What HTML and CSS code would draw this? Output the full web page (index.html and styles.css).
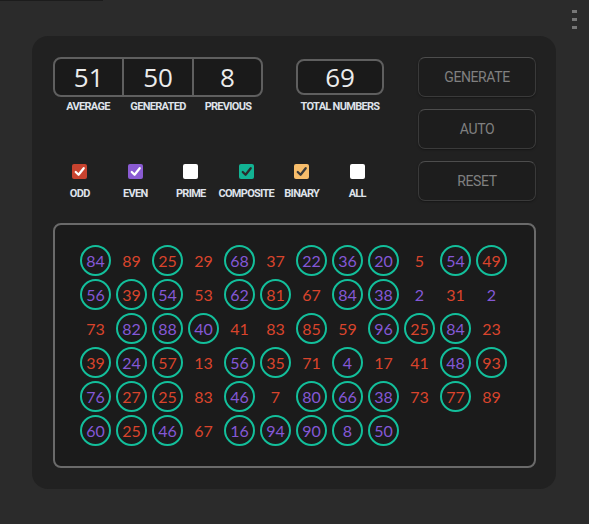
FILE: index.html
```html
<!DOCTYPE html>
<html>
<head>
<meta charset="utf-8">
<link rel="stylesheet" href="styles.css">
</head>
<body>
<div class="topline"></div>
<div class="menu"><span></span><span></span><span></span></div>
<div class="panel">
  <div class="top">
    <div class="left">
      <div class="stats">
        <div class="group">
          <div class="box triple">
            <div class="cell">51</div>
            <div class="cell">50</div>
            <div class="cell">8</div>
          </div>
          <div class="labels triple-labels">
            <span>AVERAGE</span><span>GENERATED</span><span>PREVIOUS</span>
          </div>
        </div>
        <div class="group total">
          <div class="box single"><div class="cell">69</div></div>
          <div class="labels"><span>TOTAL NUMBERS</span></div>
        </div>
      </div>
      <div class="checks">
        <div class="chk"><span class="cb odd"><svg viewBox="0 0 16 16"><polyline points="4,8.5 7,11.5 12.5,4.5"/></svg></span><span class="cl">ODD</span></div>
        <div class="chk"><span class="cb even"><svg viewBox="0 0 16 16"><polyline points="4,8.5 7,11.5 12.5,4.5"/></svg></span><span class="cl">EVEN</span></div>
        <div class="chk"><span class="cb blank"></span><span class="cl">PRIME</span></div>
        <div class="chk"><span class="cb comp"><svg viewBox="0 0 16 16"><polyline points="4,8.5 7,11.5 12.5,4.5"/></svg></span><span class="cl">COMPOSITE</span></div>
        <div class="chk"><span class="cb bin"><svg viewBox="0 0 16 16"><polyline points="4,8.5 7,11.5 12.5,4.5"/></svg></span><span class="cl">BINARY</span></div>
        <div class="chk"><span class="cb blank"></span><span class="cl">ALL</span></div>
      </div>
    </div>
    <div class="buttons">
      <button class="btn">GENERATE</button>
      <button class="btn">AUTO</button>
      <button class="btn">RESET</button>
    </div>
  </div>
  <div class="grid">
    <span class="n e c">84</span><span class="n o">89</span><span class="n o c">25</span><span class="n o">29</span><span class="n e c">68</span><span class="n o">37</span><span class="n e c">22</span><span class="n e c">36</span><span class="n e c">20</span><span class="n o">5</span><span class="n e c">54</span><span class="n o c">49</span>
    <span class="n e c">56</span><span class="n o c">39</span><span class="n e c">54</span><span class="n o">53</span><span class="n e c">62</span><span class="n o c">81</span><span class="n o">67</span><span class="n e c">84</span><span class="n e c">38</span><span class="n e">2</span><span class="n o">31</span><span class="n e">2</span>
    <span class="n o">73</span><span class="n e c">82</span><span class="n e c">88</span><span class="n e c">40</span><span class="n o">41</span><span class="n o">83</span><span class="n o c">85</span><span class="n o">59</span><span class="n e c">96</span><span class="n o c">25</span><span class="n e c">84</span><span class="n o">23</span>
    <span class="n o c">39</span><span class="n e c">24</span><span class="n o c">57</span><span class="n o">13</span><span class="n e c">56</span><span class="n o c">35</span><span class="n o">71</span><span class="n e c">4</span><span class="n o">17</span><span class="n o">41</span><span class="n e c">48</span><span class="n o c">93</span>
    <span class="n e c">76</span><span class="n o c">27</span><span class="n o c">25</span><span class="n o">83</span><span class="n e c">46</span><span class="n o">7</span><span class="n e c">80</span><span class="n e c">66</span><span class="n e c">38</span><span class="n o">73</span><span class="n o c">77</span><span class="n o">89</span>
    <span class="n e c">60</span><span class="n o c">25</span><span class="n e c">46</span><span class="n o">67</span><span class="n e c">16</span><span class="n e c">94</span><span class="n e c">90</span><span class="n e c">8</span><span class="n e c">50</span>
  </div>
</div>
</body>
</html>
```
FILE: styles.css
```css
html, body {
  margin: 0;
  padding: 0;
}
body {
  background: #2b2b2b;
  width: 589px;
  height: 524px;
  position: relative;
  overflow: hidden;
  font-family: Roboto, "Liberation Sans", sans-serif;
}
.topline {
  width: 103px;
  height: 1px;
  background: #1c1c1c;
}
.menu {
  position: absolute;
  left: 572px;
  top: 10px;
  display: flex;
  flex-direction: column;
  gap: 5px;
}
.menu span {
  display: block;
  width: 5px;
  height: 3px;
  background: #777;
}
.panel {
  margin: 35px 0 0 32px;
  width: 524px;
  height: 453px;
  box-sizing: border-box;
  background: #212121;
  border-radius: 16px;
  padding: 21px 20px 0 21px;
}
.top {
  display: flex;
  justify-content: space-between;
  height: 166px;
}
.left {
  display: flex;
  flex-direction: column;
}
.stats {
  display: flex;
  gap: 33px;
}
.group {
  display: flex;
  flex-direction: column;
  align-items: center;
}
.box {
  display: flex;
  background: #1a1a1a;
  border: 2px solid #5f5f5f;
  border-radius: 8px;
  box-sizing: border-box;
}
.triple {
  width: 210px;
  height: 40px;
}
.triple .cell {
  width: 70px;
  border-left: 2px solid #5f5f5f;
}
.triple .cell:first-child {
  border-left: none;
}
.single {
  width: 88px;
  height: 36px;
  margin-top: 2px;
}
.single .cell {
  width: 100%;
}
.cell {
  display: flex;
  align-items: center;
  justify-content: center;
  color: #ececec;
  font-family: "Open Sans", sans-serif;
  font-size: 26px;
  line-height: 1;
  padding-bottom: 1px;
}
.labels {
  display: flex;
  margin-top: 3px;
  color: #dfe3ea;
  font-size: 11px;
  font-weight: 700;
  letter-spacing: -0.7px;
  line-height: 13px;
}
.triple-labels {
  width: 210px;
}
.triple-labels span {
  width: 70px;
  text-align: center;
}
.total .labels {
  margin-top: 5px;
}
.checks {
  display: flex;
  margin-top: 51px;
  margin-left: -1px;
}
.chk {
  width: 55.5px;
  display: flex;
  flex-direction: column;
  align-items: center;
}
.cb {
  width: 15px;
  height: 15px;
  border-radius: 2px;
  display: block;
}
.cb svg {
  display: block;
  width: 15px;
  height: 15px;
  fill: none;
  stroke: #fff;
  stroke-width: 2.4;
  stroke-linecap: round;
  stroke-linejoin: round;
}
.odd { background: #c8432f; }
.even { background: #8a5bd2; }
.blank { background: #fff; }
.comp { background: #12b393; }
.comp svg { stroke: #2b2b2b; }
.bin { background: #f7bd6b; }
.bin svg { stroke: #3a3a3a; }
.cl {
  margin-top: 8px;
  color: #dfe3ea;
  font-size: 11px;
  font-weight: 700;
  letter-spacing: -0.7px;
  line-height: 13px;
}
.buttons {
  display: flex;
  flex-direction: column;
  gap: 12px;
}
.btn {
  width: 118px;
  height: 40px;
  background: #1d1d1d;
  border: 1px solid #3a3a3a;
  border-top-color: #4d4d4d;
  border-radius: 7px;
  color: #808080;
  font-family: Roboto, "Liberation Sans", sans-serif;
  font-size: 14px;
  letter-spacing: -0.4px;
  box-shadow: 0 1px 2px rgba(0,0,0,0.35);
  padding: 0;
}
.grid {
  width: 483px;
  height: 245px;
  box-sizing: border-box;
  margin-top: 0;
  border: 2px solid #6a6a6a;
  border-radius: 8px;
  background: #1b1b1b;
  padding: 20px 0 0 25px;
  display: grid;
  grid-template-columns: repeat(12, 36px);
  grid-auto-rows: 34px;
  align-content: start;
}
.n {
  width: 31px;
  height: 31px;
  box-sizing: border-box;
  border-radius: 50%;
  display: flex;
  align-items: center;
  justify-content: center;
  font-family: Lato, sans-serif;
  font-size: 16px;
  line-height: 1;
}
.c {
  border: 2px solid #13bf9b;
}
.o { color: #d9442c; }
.e { color: #8458d6; }
```
